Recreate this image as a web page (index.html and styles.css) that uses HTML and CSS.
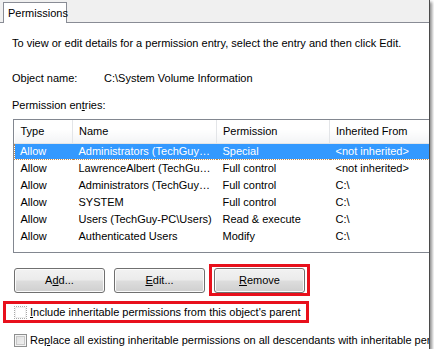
FILE: index.html
```
<!DOCTYPE html>
<html lang="en">
<head>
    <meta charset="UTF-8">
    <title>Permissions</title>
    <link rel="stylesheet" href="styles.css">
</head>
<body>
    <div class="frame">
        <div class="tabs">
            <div class="tab">Permissions</div>
        </div>
        <div class="panel">
            <p class="intro">To view or edit details for a permission entry, select the entry and then click Edit.</p>
            <div class="object">
                <span class="label">Object name:</span>
                <span>C:\System Volume Information</span>
            </div>
            <p class="entries">Permission en<u>t</u>ries:</p>
            <div class="list">
                <table class="table">
                    <colgroup>
                        <col class="c-type">
                        <col class="c-name">
                        <col class="c-perm">
                        <col class="c-from">
                    </colgroup>
                    <thead>
                        <tr>
                            <th>Type</th>
                            <th>Name</th>
                            <th>Permission</th>
                            <th>Inherited From</th>
                        </tr>
                    </thead>
                    <tbody>
                        <tr class="selected">
                            <td>Allow</td>
                            <td>Administrators (TechGuy…</td>
                            <td>Special</td>
                            <td>&lt;not inherited&gt;</td>
                        </tr>
                        <tr>
                            <td>Allow</td>
                            <td>LawrenceAlbert (TechGu…</td>
                            <td>Full control</td>
                            <td>&lt;not inherited&gt;</td>
                        </tr>
                        <tr>
                            <td>Allow</td>
                            <td>Administrators (TechGuy…</td>
                            <td>Full control</td>
                            <td>C:\</td>
                        </tr>
                        <tr>
                            <td>Allow</td>
                            <td>SYSTEM</td>
                            <td>Full control</td>
                            <td>C:\</td>
                        </tr>
                        <tr>
                            <td>Allow</td>
                            <td>Users (TechGuy-PC\Users)</td>
                            <td>Read &amp; execute</td>
                            <td>C:\</td>
                        </tr>
                        <tr>
                            <td>Allow</td>
                            <td>Authenticated Users</td>
                            <td>Modify</td>
                            <td>C:\</td>
                        </tr>
                    </tbody>
                </table>
            </div>
            <div class="buttons">
                <button class="btn">A<u>d</u>d...</button>
                <button class="btn"><u>E</u>dit...</button>
                <div class="mark">
                    <button class="btn"><u>R</u>emove</button>
                </div>
            </div>
            <label class="check marked-row">
                <span class="box focus"></span>
                <span><u>I</u>nclude inheritable permissions from this object's parent</span>
            </label>
            <label class="check">
                <span class="box"></span>
                <span>Re<u>p</u>lace all existing inheritable permissions on all descendants with inheritable permissi</span>
            </label>
        </div>
    </div>
</body>
</html>
```

FILE: styles.css
```
body{
    margin: 0;
    background: #ffffff;
    font-family: "Liberation Sans", Arial, sans-serif;
    font-size: 11px;
    color: #000000;
}
.frame{
    width: 429px;
    height: 349px;
    background: #f0f0f0;
    border-right: 1px solid #4a4a4a;
    box-shadow: 2px 2px 3px rgba(0, 0, 0, 0.45);
    overflow: hidden;
}
.tabs{
    height: 22px;
    padding: 2px 0 0 3px;
    box-sizing: border-box;
}
.tab{
    display: inline-block;
    width: 64px;
    height: 21px;
    line-height: 20px;
    padding-left: 4px;
    box-sizing: border-box;
    background: #ffffff;
    border: 1px solid #898c95;
    border-bottom: none;
    position: relative;
    z-index: 1;
}
.panel{
    height: 327px;
    background: #ffffff;
    border-top: 1px solid #898c95;
    padding: 13px 0 0 12px;
    box-sizing: border-box;
    line-height: 15px;
}
.intro{
    margin: 0;
}
.object{
    margin-top: 20px;
    display: flex;
}
.object .label{
    width: 92px;
}
.entries{
    margin: 12px 0 0;
}
.list{
    margin: 6px 0 0 1px;
    width: 440px;
    height: 134px;
    border: 1px solid #828790;
    box-sizing: border-box;
}
.table{
    border-collapse: collapse;
    table-layout: fixed;
    width: 100%;
}
.c-type{ width: 58px; }
.c-name{ width: 144px; }
.c-perm{ width: 113px; }
.table th{
    height: 23px;
    padding: 0 0 0 6px;
    text-align: left;
    font-weight: normal;
    background: linear-gradient(#ffffff 0%, #ffffff 40%, #f3f4f6 100%);
    border-right: 1px solid #e3e5e8;
    border-bottom: 1px solid #e3e5e8;
}
.table td{
    height: 17px;
    padding: 0 0 0 6px;
    white-space: nowrap;
    overflow: hidden;
}
.table tr.selected td{
    background: #3399ff;
    color: #ffffff;
    border-top: 1px dotted #c48a4c;
    border-bottom: 1px dotted #c48a4c;
    height: 15px;
}
.table tr.selected td:first-child{
    border-left: 1px dotted #c48a4c;
    padding-left: 5px;
}
.buttons{
    margin-top: 15px;
    display: flex;
    gap: 9px;
    padding-left: 2px;
}
.btn{
    width: 91px;
    height: 25px;
    font: inherit;
    color: #000000;
    border: 1px solid #707070;
    border-radius: 3px;
    background: linear-gradient(#f2f2f2 0%, #ebebeb 48%, #dddddd 52%, #cfcfcf 100%);
    box-shadow: inset 0 0 0 1px #fbfbfb;
    padding: 0;
}
/* red annotation boxes */
.mark{
    display: flex;
    margin: -4px -5px -3px -5px;
    padding: 1px 2px 0 2px;
    border: 3px solid #e8101c;
}
.check{
    display: flex;
    align-items: center;
    gap: 3px;
    height: 15px;
    white-space: nowrap;
}
.marked-row{
    width: 292px;
    height: 16px;
    margin: 8px 0 0 -9px;
    padding-left: 8px;
    border: 3px solid #e8101c;
}
.check:last-child{
    margin-top: 10px;
    padding-left: 2px;
}
.box{
    flex: none;
    width: 11px;
    height: 11px;
    border: 1px solid #8e8f8f;
    background: linear-gradient(135deg, #dcdcdc 0%, #f4f4f4 100%);
    box-shadow: inset 0 0 0 1px #f4f4f4, inset 0 0 0 2px #c8c8c8;
}
.box.focus{
    border: 1px dotted #a8a8a8;
    background: #ffffff;
    box-shadow: inset 0 0 0 1px #f0f0f0;
}
```
